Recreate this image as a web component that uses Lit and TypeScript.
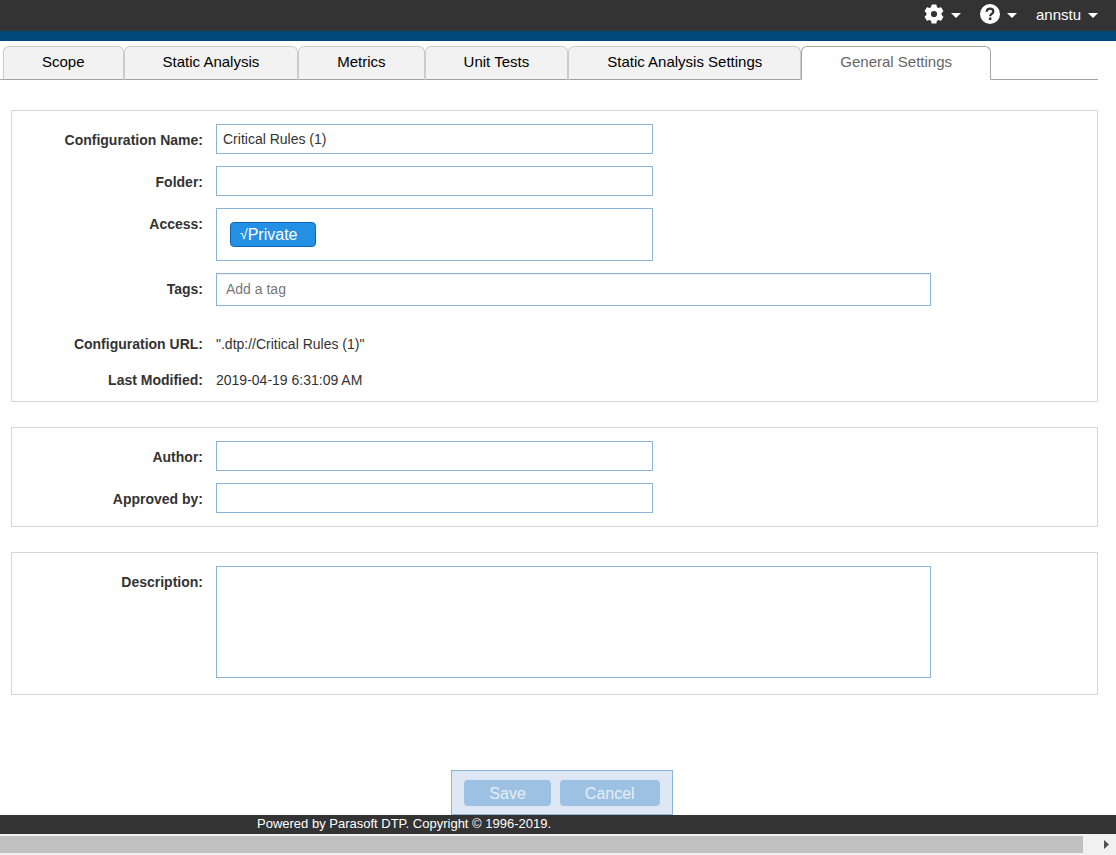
import { LitElement, html, css, svg } from "lit";
import { customElement, state } from "lit/decorators.js";

const TABS = [
  "Scope",
  "Static Analysis",
  "Metrics",
  "Unit Tests",
  "Static Analysis Settings",
  "General Settings",
];

const GEAR_TEETH = [0, 60, 120, 180, 240, 300];

@customElement("app-root")
export class AppRoot extends LitElement {
  @state() private activeTab = "General Settings";

  static styles = css`
    :host {
      display: flex;
      flex-direction: column;
      min-height: 100vh;
      background: #fff;
      color: #333;
      font: 14px/20px "Liberation Sans", Arial, sans-serif;
    }
    *, *::before, *::after {
      box-sizing: border-box;
    }
    button, input, textarea {
      margin: 0;
      font: inherit;
      color: inherit;
    }
    .topbar {
      display: flex;
      justify-content: flex-end;
      gap: 19px;
      height: 41px;
      padding-right: 18px;
      padding-bottom: 2px;
      background: #333;
      border-bottom: 10px solid #004a7a;
    }
    .menu {
      display: flex;
      align-items: center;
      gap: 7px;
      padding: 0;
      border: 0;
      background: none;
      color: #fff;
      font-size: 15px;
    }
    .menu svg {
      display: block;
    }
    .menu .icon {
      margin-bottom: 2px;
    }
    .menu .caret {
      margin-top: 2px;
    }
    .tabs {
      display: flex;
      margin: 5px 18px 0 0;
    }
    .tabs::before, .tabs::after {
      content: "";
      width: 3px;
      border-bottom: 1px solid #a3a3a3;
    }
    .tabs::after {
      flex: 1;
    }
    .tab {
      height: 34px;
      padding: 0 38px 2px;
      border: 1px solid #ccc;
      border-bottom-color: #a3a3a3;
      border-radius: 6px 6px 0 0;
      background: #f2f2f2;
      color: #000;
      font-size: 15px;
      white-space: nowrap;
    }
    .tab.active {
      border-color: #a3a3a3;
      border-bottom-color: #fff;
      background: #fff;
      color: #666;
    }
    form {
      display: flex;
      flex: 1;
      flex-direction: column;
    }
    .panels {
      display: flex;
      flex: 1;
      flex-direction: column;
      gap: 25px;
      margin: 30px 18px 30px 11px;
    }
    .panel {
      display: flex;
      flex-direction: column;
      gap: 12px;
      padding: 13px 0;
      border: 1px solid #d6d6d6;
    }
    .row {
      display: grid;
      grid-template-columns: 191px 1fr;
      column-gap: 13px;
      align-items: start;
    }
    .row.static {
      height: 24px;
    }
    .row.spaced {
      margin-top: 10px;
    }
    .label {
      padding-top: 6px;
      font-weight: bold;
      text-align: right;
    }
    .value {
      padding-top: 6px;
    }
    .field {
      display: block;
      width: 100%;
      max-width: 437px;
      height: 30px;
      padding: 0 6px;
      border: 1px solid #8db3d6;
      border-radius: 0;
      background: #fff;
      outline: 0;
    }
    .field.wide {
      max-width: 715px;
    }
    .field.tags {
      height: 33px;
      padding: 0 9px 2px;
      box-shadow: inset 0 1px 1px rgba(0, 0, 0, 0.075);
    }
    .field.tags::placeholder {
      color: #777;
      opacity: 1;
    }
    .field.access {
      height: 53px;
      padding: 13px;
    }
    .field.area {
      height: 112px;
      margin-bottom: 3px;
      padding: 6px;
      resize: none;
    }
    .chip {
      display: flex;
      align-items: center;
      height: 25px;
      padding: 0 18px 0 9px;
      border: 1px solid #0e69b4;
      border-radius: 4px;
      background: #2490e3;
      color: #fff;
      font-size: 16px;
    }
    .check {
      padding-bottom: 2px;
      font-size: 14px;
    }
    .actions {
      display: flex;
      align-self: center;
      gap: 9px;
      margin-left: 8px;
      padding: 9px 12px 8px;
      border: 1px solid #8db3d6;
      background: #dde8f4;
    }
    .action {
      height: 26px;
      padding: 1px 25px 0;
      border: 0;
      border-radius: 4px;
      background: #9cc1e2;
      color: #e6eff8;
      font-size: 16px;
    }
    .footer {
      height: 19px;
      padding-left: 257px;
      background: #333;
      color: #fff;
      font-size: 13px;
      line-height: 18px;
    }
    .scrollbar {
      display: flex;
      align-items: center;
      height: 21px;
      background: #f1f1f1;
    }
    .thumb {
      flex: 1;
      height: 17px;
      background: #c1c1c1;
    }
    .arrow {
      display: flex;
      justify-content: flex-end;
      width: 33px;
      padding-right: 7px;
    }
  `;

  private caret() {
    return html`<svg class="caret" width="10" height="5" viewBox="0 0 10 5" aria-hidden="true">
      <path d="M0 0h10L5 5z" fill="#fff" />
    </svg>`;
  }

  render() {
    return html`
      <header class="topbar">
        <button class="menu" aria-label="Settings">
          <svg class="icon" width="20" height="20" viewBox="0 0 20 20" fill="#fff" aria-hidden="true">
            <path
              fill-rule="evenodd"
              d="M10 2.400a7.600 7.600 0 1 0 0 15.200a7.600 7.600 0 1 0 0-15.200zM10 6.900a3.100 3.100 0 1 1 0 6.200a3.100 3.100 0 1 1 0-6.200z"
            />
            ${GEAR_TEETH.map(
              (angle) => svg`<path d="M6.900 4.200L7.500 1Q7.600.4 8.200.4h3.600q.6 0 .7.600l.6 3.200z" transform="rotate(${angle} 10 10)" />`,
            )}
          </svg>
          ${this.caret()}
        </button>
        <button class="menu" aria-label="Help">
          <svg class="icon" width="20" height="20" viewBox="0 0 20 20" aria-hidden="true">
            <circle cx="10" cy="10" r="10" fill="#fff" />
            <path
              d="M6.700 7.800C6.800 5.600 8.200 4.600 10 4.600c1.900 0 3.300 1.100 3.300 2.800c0 2.500-3.100 2.400-3.100 4.900"
              fill="none"
              stroke="#333"
              stroke-width="2.300"
            />
            <rect x="8.900" y="13.500" width="2.500" height="2.500" fill="#333" />
          </svg>
          ${this.caret()}
        </button>
        <button class="menu">annstu ${this.caret()}</button>
      </header>

      <nav class="tabs" role="tablist">
        ${TABS.map(
          (name) => html`<button
            role="tab"
            class="tab ${name === this.activeTab ? "active" : ""}"
            aria-selected=${name === this.activeTab ? "true" : "false"}
            @click=${() => (this.activeTab = name)}
          >${name}</button>`,
        )}
      </nav>

      <form @submit=${(e: Event) => e.preventDefault()}>
        <div class="panels">
          <section class="panel">
            <div class="row">
              <label class="label" for="name">Configuration Name:</label>
              <input class="field" id="name" type="text" value="Critical Rules (1)" />
            </div>
            <div class="row">
              <label class="label" for="folder">Folder:</label>
              <input class="field" id="folder" type="text" />
            </div>
            <div class="row">
              <span class="label" id="access">Access:</span>
              <div class="field access" role="group" aria-labelledby="access">
                <button class="chip" type="button" aria-pressed="true"><span class="check">√</span>Private</button>
              </div>
            </div>
            <div class="row">
              <label class="label" for="tags">Tags:</label>
              <input class="field wide tags" id="tags" type="text" placeholder="Add a tag" />
            </div>
            <div class="row static spaced">
              <span class="label">Configuration URL:</span>
              <span class="value">".dtp://Critical Rules (1)"</span>
            </div>
            <div class="row static">
              <span class="label">Last Modified:</span>
              <span class="value">2019-04-19 6:31:09 AM</span>
            </div>
          </section>

          <section class="panel">
            <div class="row">
              <label class="label" for="author">Author:</label>
              <input class="field" id="author" type="text" />
            </div>
            <div class="row">
              <label class="label" for="approved">Approved by:</label>
              <input class="field" id="approved" type="text" />
            </div>
          </section>

          <section class="panel">
            <div class="row">
              <label class="label" for="description">Description:</label>
              <textarea class="field wide area" id="description"></textarea>
            </div>
          </section>
        </div>

        <div class="actions">
          <button class="action" type="submit">Save</button>
          <button class="action" type="button">Cancel</button>
        </div>
      </form>

      <footer class="footer">Powered by Parasoft DTP. Copyright © 1996-2019.</footer>
      <div class="scrollbar" aria-hidden="true">
        <div class="thumb"></div>
        <div class="arrow">
          <svg width="5" height="9" viewBox="0 0 5 9"><path d="M0 0v9l5-4.500z" fill="#505050" /></svg>
        </div>
      </div>
    `;
  }
}
